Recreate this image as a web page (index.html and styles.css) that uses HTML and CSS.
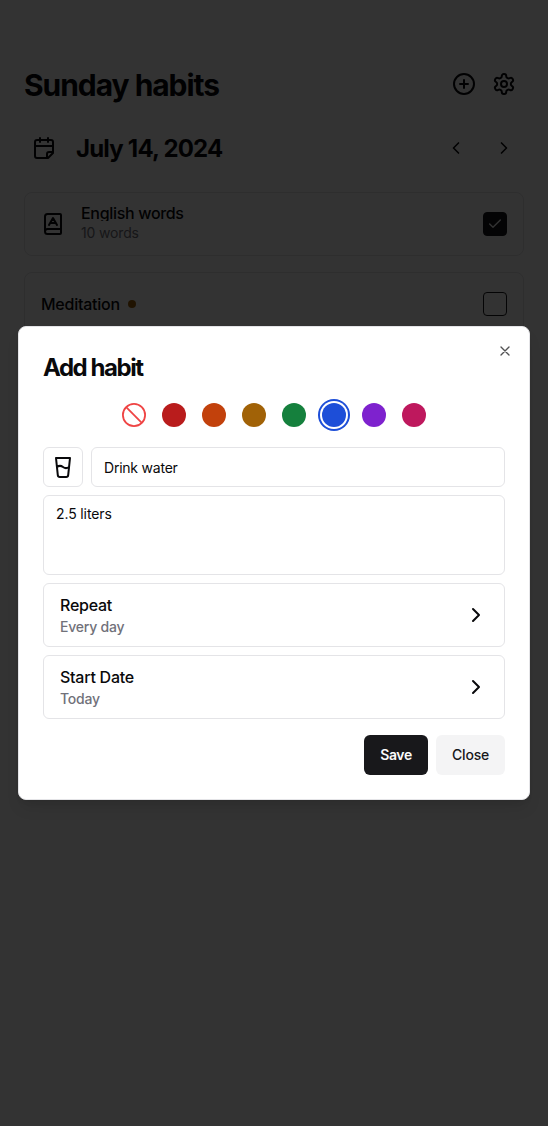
FILE: index.html
```html
<!DOCTYPE html>
<html lang="en">
<head>
<meta charset="utf-8">
<title>Sunday habits</title>
<link rel="stylesheet" href="styles.css">
</head>
<body>
<main class="page">
  <header class="bar">
    <h1 class="title">Sunday habits</h1>
    <div class="actions">
      <button class="icon-btn" aria-label="Add"><svg class="icon" viewBox="0 0 24 24"><circle cx="12" cy="12" r="10"/><path d="M8 12h8M12 8v8"/></svg></button>
      <button class="icon-btn" aria-label="Settings"><svg class="icon" viewBox="0 0 24 24"><path d="M12.22 2h-.44a2 2 0 0 0-2 2v.18a2 2 0 0 1-1 1.73l-.43.25a2 2 0 0 1-2 0l-.15-.08a2 2 0 0 0-2.73.73l-.22.38a2 2 0 0 0 .73 2.73l.15.1a2 2 0 0 1 1 1.72v.51a2 2 0 0 1-1 1.74l-.15.09a2 2 0 0 0-.73 2.73l.22.38a2 2 0 0 0 2.73.73l.15-.08a2 2 0 0 1 2 0l.43.25a2 2 0 0 1 1 1.73V20a2 2 0 0 0 2 2h.44a2 2 0 0 0 2-2v-.18a2 2 0 0 1 1-1.73l.43-.25a2 2 0 0 1 2 0l.15.08a2 2 0 0 0 2.73-.73l.22-.39a2 2 0 0 0-.73-2.73l-.15-.08a2 2 0 0 1-1-1.74v-.5a2 2 0 0 1 1-1.74l.15-.09a2 2 0 0 0 .73-2.73l-.22-.38a2 2 0 0 0-2.73-.73l-.15.08a2 2 0 0 1-2 0l-.43-.25a2 2 0 0 1-1-1.73V4a2 2 0 0 0-2-2z"/><circle cx="12" cy="12" r="3"/></svg></button>
    </div>
  </header>
  <div class="bar bar-date">
    <button class="icon-btn" aria-label="Calendar"><svg class="icon" viewBox="0 0 24 24"><path d="M8 2v4M16 2v4M21 17V6a2 2 0 0 0-2-2H5a2 2 0 0 0-2 2v14a2 2 0 0 0 2 2h11ZM3 10h18M15 22v-4a2 2 0 0 1 2-2h4"/></svg></button>
    <h2 class="date">July 14, 2024</h2>
    <div class="pager">
      <button class="icon-btn" aria-label="Previous"><svg class="icon icon-20" viewBox="0 0 24 24"><path d="m15 18-6-6 6-6"/></svg></button>
      <button class="icon-btn" aria-label="Next"><svg class="icon icon-20" viewBox="0 0 24 24"><path d="m9 18 6-6-6-6"/></svg></button>
    </div>
  </div>
  <section class="habits">
    <article class="habit">
      <svg class="icon habit-icon" viewBox="0 0 24 24"><path d="M4 19.5v-15A2.5 2.5 0 0 1 6.5 2H19a1 1 0 0 1 1 1v18a1 1 0 0 1-1 1H6.5a1 1 0 0 1 0-5H20M8 13l4-7 4 7M9.1 11h5.7"/></svg>
      <div class="habit-text">
        <div class="habit-name clipped">English words</div>
        <div class="habit-note">10 words</div>
      </div>
      <span class="check checked"><svg class="icon icon-16 tick" viewBox="0 0 24 24"><path d="M20 6 9 17l-5-5"/></svg></span>
    </article>
    <article class="habit">
      <div class="habit-name solo">Meditation<i class="dot"></i></div>
      <span class="check"></span>
    </article>
  </section>
</main>
<div class="overlay">
  <section class="dialog" role="dialog" aria-label="Add habit">
    <button class="dismiss" aria-label="Dismiss"><svg class="icon icon-16" viewBox="0 0 24 24"><path d="M18 6 6 18M6 6l12 12"/></svg></button>
    <h2 class="dialog-title">Add habit</h2>
    <div class="swatches">
      <svg class="none" viewBox="0 0 24 24"><circle cx="12" cy="12" r="11.1"/><path d="m4.2 4.2 15.6 15.6"/></svg>
      <i class="swatch red"></i><i class="swatch orange"></i><i class="swatch yellow"></i><i class="swatch green"></i><i class="swatch blue selected"></i><i class="swatch purple"></i><i class="swatch pink"></i>
    </div>
    <div class="name-row">
      <button class="box glass" aria-label="Icon"><svg class="icon" viewBox="0 0 24 24"><path d="M15.2 22H8.8a2 2 0 0 1-2-1.79L5 3h14l-1.81 17.21A2 2 0 0 1 15.2 22ZM6 12a5 5 0 0 1 6 0 5 5 0 0 0 6 0"/></svg></button>
      <div class="box field">Drink water</div>
    </div>
    <div class="box area">2.5 liters</div>
    <div class="box option">
      <div><div class="option-name">Repeat</div><div class="option-value">Every day</div></div>
      <svg class="icon" viewBox="0 0 24 24"><path d="m9 18 6-6-6-6"/></svg>
    </div>
    <div class="box option">
      <div><div class="option-name">Start Date</div><div class="option-value">Today</div></div>
      <svg class="icon" viewBox="0 0 24 24"><path d="m9 18 6-6-6-6"/></svg>
    </div>
    <footer class="footer">
      <button class="btn primary">Save</button>
      <button class="btn secondary">Close</button>
    </footer>
  </section>
</div>
</body>
</html>
```

FILE: styles.css
```css
* { box-sizing: border-box; }
body { margin: 0; height: 1126px; overflow: hidden; background: #fff; color: #09090b; font-family: Inter, "Liberation Sans", sans-serif; }
h1, h2 { margin: 0; font-weight: 650; }
button { border: 0; padding: 0; background: none; color: inherit; font: inherit; }
.icon { display: block; flex: none; width: 24px; height: 24px; fill: none; stroke: currentColor; stroke-width: 2; stroke-linecap: round; stroke-linejoin: round; }
.icon-20 { width: 20px; height: 20px; }
.icon-16 { width: 16px; height: 16px; }
.icon-btn { display: flex; align-items: center; justify-content: center; width: 40px; height: 40px; }

.page { padding: 64px 24px 0; }
.bar { display: flex; align-items: center; height: 40px; }
.title { padding-top: 1px; font-size: 30px; line-height: 36px; letter-spacing: -1.05px; }
.actions { display: flex; margin-left: auto; }
.bar-date { margin-top: 24px; }
.date { margin-left: 12px; padding-top: 2px; font-size: 24px; line-height: 32px; letter-spacing: -0.8px; }
.pager { display: flex; gap: 8px; margin-left: auto; }
.habits { display: flex; flex-direction: column; gap: 16px; margin-top: 24px; }
.habit { display: flex; align-items: center; height: 64px; padding: 0 16px; border: 1px solid #e4e4e7; border-radius: 8px; }
.habit-icon { margin-right: 16px; }
.habit-name { font-size: 16px; line-height: 20px; font-weight: 500; letter-spacing: -0.25px; }
.clipped { margin-bottom: 2px; line-height: 16px; overflow: hidden; letter-spacing: -0.32px; }
.habit-note { font-size: 14px; line-height: 20px; letter-spacing: -0.15px; color: #71717a; }
.solo { display: flex; align-items: center; gap: 8px; }
.dot { width: 8px; height: 8px; border-radius: 50%; background: #a16207; }
.check { display: flex; align-items: center; justify-content: center; width: 24px; height: 24px; margin-left: auto; border: 1px solid #18181b; border-radius: 4px; }
.checked { background: #18181b; }
.tick { color: #fafafa; }

.overlay { position: absolute; inset: 0; display: flex; align-items: center; justify-content: center; background: rgba(0, 0, 0, .8); }
.dialog { position: relative; width: 512px; height: 474px; padding: 24px; border: 1px solid #e4e4e7; border-radius: 8px; background: #fff; box-shadow: 0 10px 15px -3px rgba(0, 0, 0, .1), 0 4px 6px -4px rgba(0, 0, 0, .1); }
.dismiss { position: absolute; top: 16px; right: 16px; opacity: .7; }
.dialog-title { padding-top: 1px; font-size: 24px; line-height: 32px; letter-spacing: -1.45px; }
.swatches { display: flex; justify-content: center; gap: 16px; margin: 19px 0 20px; }
.swatch { width: 24px; height: 24px; border-radius: 50%; }
.none { width: 24px; height: 24px; fill: none; stroke: #ef4444; stroke-width: 1.8; }
.red { background: #b91c1c; }
.orange { background: #c2410c; }
.yellow { background: #a16207; }
.green { background: #15803d; }
.blue { background: #1d4ed8; }
.purple { background: #7e22ce; }
.pink { background: #be185d; }
.selected { box-shadow: 0 0 0 2px #fff, 0 0 0 4px #1d4ed8; }
.box { border: 1px solid #e4e4e7; border-radius: 6px; }
.name-row { display: flex; gap: 8px; }
.glass { display: flex; align-items: center; justify-content: center; width: 40px; height: 40px; }
.field { display: flex; flex: 1; align-items: center; padding: 2px 12px 0; font-size: 14px; line-height: 20px; letter-spacing: -0.22px; }
.area { height: 80px; margin-top: 8px; padding: 8px 12px; font-size: 14px; line-height: 20px; letter-spacing: -0.12px; }
.option { display: flex; align-items: center; justify-content: space-between; height: 64px; margin-top: 8px; padding: 0 16px; }
.option-name { font-size: 16px; line-height: 24px; font-weight: 550; letter-spacing: -0.25px; }
.option-value { font-size: 14px; line-height: 20px; font-weight: 500; letter-spacing: -0.22px; color: #71717a; }
.footer { display: flex; justify-content: flex-end; gap: 8px; margin-top: 16px; }
.btn { height: 40px; padding-bottom: 2px; border-radius: 6px; font-size: 14px; font-weight: 550; letter-spacing: -0.2px; }
.primary { width: 64px; background: #18181b; color: #fafafa; font-weight: 600; letter-spacing: -0.4px; }
.secondary { width: 69px; background: #f4f4f5; color: #18181b; }
```
